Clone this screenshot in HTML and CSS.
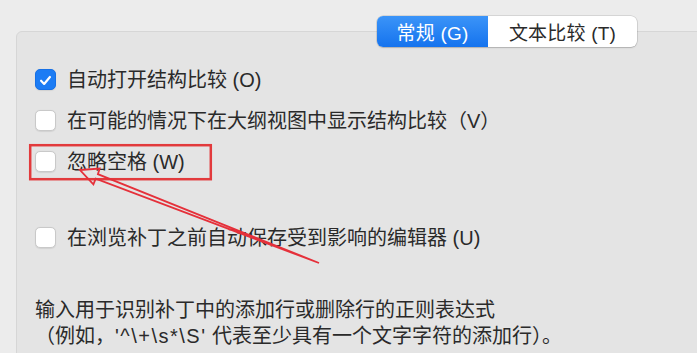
FILE: index.html
```html
<!DOCTYPE html>
<html lang="zh-CN">
<head>
<meta charset="utf-8">
<title>偏好设置</title>
<link rel="stylesheet" href="styles.css">
</head>
<body>
<div class="page">
  <div class="tabbar">
    <div class="segmented">
      <div class="seg seg-active">常规 (G)</div>
      <div class="seg">文本比较 (T)</div>
    </div>
  </div>
  <div class="panel">
    <div class="row"><span class="box box-checked"><svg viewBox="0 0 21 21" width="21" height="21"><path d="M5.6 10.8 L9 14.3 L15.4 6.6" fill="none" stroke="#fff" stroke-width="2.4" stroke-linecap="round" stroke-linejoin="round"/></svg></span><span class="label">自动打开结构比较 (O)</span></div>
    <div class="row"><span class="box"></span><span class="label">在可能的情况下在大纲视图中显示结构比较（V）</span></div>
    <div class="row"><span class="box"></span><span class="label">忽略空格 (W)</span></div>
    <div class="row row-spaced"><span class="box"></span><span class="label">在浏览补丁之前自动保存受到影响的编辑器 (U)</span></div>
    <div class="desc">
      <div class="desc-line">输入用于识别补丁中的添加行或删除行的正则表达式</div>
      <div class="desc-line">（例如，<span class="regex">'^\+\s*\S'</span> 代表至少具有一个文字字符的添加行）。</div>
    </div>
  </div>
  <svg class="annot" width="697" height="353" viewBox="0 0 697 353">
    <rect x="30.2" y="145.2" width="180.6" height="34" fill="none" stroke="#e23a3c" stroke-width="2.5"/>
    <polygon points="80,170 99.7,168.6 97.9,174.2 319,263 95.7,178.6 93.4,184.4" fill="none" stroke="#e5303a" stroke-width="1.8" stroke-linejoin="miter"/>
  </svg>
</div>
</body>
</html>
```
FILE: styles.css
```css
html, body {
  margin: 0;
  padding: 0;
}
body {
  background: #ececec;
  font-family: "Liberation Sans", "Noto Sans CJK SC", sans-serif;
  color: #2a2a2a;
}
.page {
  position: relative;
  width: 697px;
  height: 353px;
  overflow: hidden;
  background: #ececec;
}
.tabbar {
  display: flex;
  justify-content: flex-end;
  padding: 16px 60px 0 0;
  position: relative;
  z-index: 2;
}
.segmented {
  display: flex;
  height: 31px;
  border-radius: 6px;
  background: #fff;
  box-shadow: 0 0 0 0.5px rgba(0,0,0,0.18), 0 1px 1.5px rgba(0,0,0,0.15);
  overflow: hidden;
}
.seg {
  display: flex;
  align-items: center;
  justify-content: center;
  font-size: 19px;
  color: #2a2a2a;
  width: 149px;
  letter-spacing: 0.2px;
}
.seg-active {
  width: 111px;
  color: #fff;
  background: linear-gradient(#3b94f8, #1573ee);
}
.panel {
  margin: -16px -20px 0 16px;
  height: 340px;
  box-sizing: border-box;
  background: #e4e4e4;
  border: 1px solid #d6d6d6;
  border-radius: 6px;
  padding: 27px 0 0 18px;
}
.row {
  display: flex;
  align-items: center;
  height: 41px;
}
.row-spaced {
  margin-top: 35px;
}
.box {
  width: 21px;
  height: 21px;
  box-sizing: border-box;
  border-radius: 5px;
  background: #fff;
  border: 1px solid #c9c9c9;
  box-shadow: 0 0.5px 1px rgba(0,0,0,0.08);
  flex: none;
  display: flex;
}
.box-checked {
  background: #1c7cf4;
  border-color: #1670e6;
}
.label {
  margin-left: 11px;
  font-size: 20px;
  line-height: 24px;
  white-space: nowrap;
}
.desc {
  margin-top: 39px;
  font-size: 20px;
  white-space: nowrap;
}
.desc-line {
  height: 26px;
  line-height: 26px;
}
.regex {
  letter-spacing: 1.5px;
}
.annot {
  position: absolute;
  left: 0;
  top: 0;
  pointer-events: none;
  z-index: 3;
}
```
